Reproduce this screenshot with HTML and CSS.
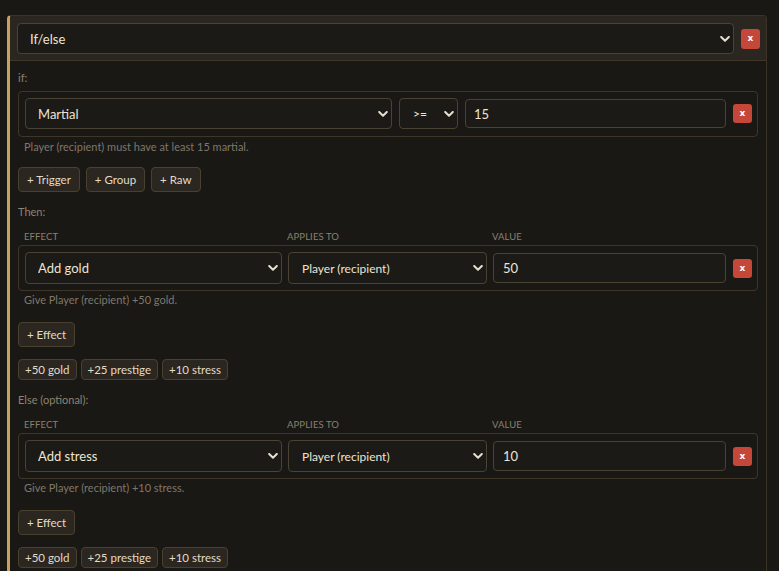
FILE: index.html
```html
<!DOCTYPE html>
<html>
<head>
<meta charset="utf-8">
<link rel="stylesheet" href="styles.css">
</head>
<body>
<div class="page">
  <div class="card">
    <div class="card-head">
      <div class="sel sel-type">
        <select><option>If/else</option></select>
        <svg class="chev" width="10" height="6" viewBox="0 0 10 6"><polyline points="1.2,1 5,4.8 8.8,1"/></svg>
      </div>
      <button class="del del-head">x</button>
    </div>
    <div class="card-body">
      <div class="sec-label sec-if">if:</div>
      <div class="row-box cond-row">
        <div class="sel sel-trait">
          <select><option>Martial</option></select>
          <svg class="chev" width="10" height="6" viewBox="0 0 10 6"><polyline points="1.2,1 5,4.8 8.8,1"/></svg>
        </div>
        <div class="sel sel-op">
          <select><option>&gt;=</option></select>
          <svg class="chev" width="10" height="6" viewBox="0 0 10 6"><polyline points="1.2,1 5,4.8 8.8,1"/></svg>
        </div>
        <input class="val val-cond" value="15">
        <button class="del">x</button>
      </div>
      <div class="hint">Player (recipient) must have at least 15 martial.</div>
      <div class="btn-row add-row">
        <button class="btn">+ Trigger</button>
        <button class="btn">+ Group</button>
        <button class="btn">+ Raw</button>
      </div>

      <div class="sec-label sec-then">Then:</div>
      <div class="cols"><span>Effect</span><span>Applies to</span><span>Value</span></div>
      <div class="row-box eff-row">
        <div class="sel sel-effect">
          <select><option>Add gold</option></select>
          <svg class="chev" width="10" height="6" viewBox="0 0 10 6"><polyline points="1.2,1 5,4.8 8.8,1"/></svg>
        </div>
        <div class="sel sel-target">
          <select><option>Player (recipient)</option></select>
          <svg class="chev" width="10" height="6" viewBox="0 0 10 6"><polyline points="1.2,1 5,4.8 8.8,1"/></svg>
        </div>
        <input class="val val-eff" value="50">
        <button class="del">x</button>
      </div>
      <div class="hint">Give Player (recipient) +50 gold.</div>
      <div class="btn-row effect-row"><button class="btn">+ Effect</button></div>
      <div class="btn-row quick">
        <button class="btn btn-q">+50 gold</button>
        <button class="btn btn-q">+25 prestige</button>
        <button class="btn btn-q">+10 stress</button>
      </div>

      <div class="sec-label sec-else">Else (optional):</div>
      <div class="cols"><span>Effect</span><span>Applies to</span><span>Value</span></div>
      <div class="row-box eff-row">
        <div class="sel sel-effect">
          <select><option>Add stress</option></select>
          <svg class="chev" width="10" height="6" viewBox="0 0 10 6"><polyline points="1.2,1 5,4.8 8.8,1"/></svg>
        </div>
        <div class="sel sel-target">
          <select><option>Player (recipient)</option></select>
          <svg class="chev" width="10" height="6" viewBox="0 0 10 6"><polyline points="1.2,1 5,4.8 8.8,1"/></svg>
        </div>
        <input class="val val-eff" value="10">
        <button class="del">x</button>
      </div>
      <div class="hint">Give Player (recipient) +10 stress.</div>
      <div class="btn-row effect-row"><button class="btn">+ Effect</button></div>
      <div class="btn-row quick">
        <button class="btn btn-q">+50 gold</button>
        <button class="btn btn-q">+25 prestige</button>
        <button class="btn btn-q">+10 stress</button>
      </div>
    </div>
  </div>
</div>
</body>
</html>
```

FILE: styles.css
```css
html, body {
  margin: 0;
  padding: 0;
  background: #1a1814;
  overflow: hidden;
}
body {
  font-family: Lato, "Liberation Sans", sans-serif;
  color: #e9e1d1;
}
.page {
  padding: 15px 12px 0 7px;
}
.card {
  background: #1a1814;
  border: 1px solid #3a3327;
  border-left: 3px solid #c9a15e;
  border-radius: 4px;
  padding-bottom: 20px;
}
.card-head {
  display: flex;
  align-items: center;
  gap: 7px;
  background: #2b2720;
  border-bottom: 1px solid #3d3629;
  border-radius: 3px 3px 0 0;
  padding: 7px 6px 6px 7px;
}
.sel {
  position: relative;
}
.sel select {
  appearance: none;
  -webkit-appearance: none;
  display: block;
  width: 100%;
  height: 31px;
  margin: 0;
  background: #1c1a16;
  border: 1px solid #4a4233;
  border-radius: 4px;
  color: #ece4d4;
  font-family: inherit;
  font-size: 13px;
  padding: 0 24px 0 12px;
  outline: none;
}
.chev {
  position: absolute;
  right: 4px;
  top: 50%;
  transform: translateY(-50%);
  fill: none;
  stroke: #e6dece;
  stroke-width: 2;
  stroke-linecap: round;
  stroke-linejoin: round;
  pointer-events: none;
}
.sel-type {
  flex: 1;
}
.del {
  width: 19px;
  height: 19px;
  padding: 0;
  margin: 0;
  border: none;
  border-radius: 3px;
  background: #c4473a;
  color: #fff;
  font-family: "DejaVu Sans", sans-serif;
  font-size: 9px;
  font-weight: bold;
  line-height: 19px;
  flex: none;
}
.del-head {
  height: 20px;
}
.card-body {
  padding: 0 8px;
}
.sec-label {
  font-size: 11px;
  line-height: 15px;
  color: #8c8372;
}
.sec-if { margin-top: 9px; }
.sec-then { margin-top: 12px; }
.sec-else { margin-top: 12px; }
.row-box {
  display: flex;
  align-items: center;
  border: 1px solid #3d3629;
  border-radius: 4px;
  padding: 6px 5px 6px 6px;
}
.cond-row {
  margin-top: 6px;
  gap: 7px;
  padding-bottom: 7px;
}
.sel-trait { width: 367px; flex: none; }
.sel-op { width: 59px; flex: none; }
.sel-op select { font-size: 12px; padding-left: 13px; }
.val {
  box-sizing: border-box;
  height: 30px;
  margin: 0;
  background: #1c1a16;
  border: 1px solid #4a4233;
  border-radius: 4px;
  color: #ece4d4;
  font-family: inherit;
  font-size: 13px;
  padding: 0 8px;
  outline: none;
  min-width: 0;
}
.val-cond { width: 261px; height: 29px; flex: none; }
.val-eff { flex: 1; padding-left: 9px; }
.hint {
  font-size: 11px;
  line-height: 15px;
  color: #7f776a;
  padding-left: 6px;
  margin-top: 2px;
}
.eff-row + .hint { margin-top: 1px; }
.btn-row {
  display: flex;
  gap: 6px;
}
.add-row { margin-top: 13px; }
.btn {
  height: 25px;
  margin: 0;
  padding: 0 8px;
  background: #2b2720;
  border: 1px solid #48412f;
  border-radius: 4px;
  color: #e2dacb;
  font-family: inherit;
  font-size: 11.5px;
}
.effect-row { margin-top: 15px; }
.quick {
  margin-top: 12px;
  gap: 4px;
}
.btn-q {
  height: 21px;
  padding: 0 6px;
}
.cols {
  display: flex;
  margin-top: 11px;
  padding-left: 6px;
  font-size: 9.5px;
  line-height: 13px;
  letter-spacing: 0.1px;
  text-transform: uppercase;
  color: #8a8070;
}
.cols span:nth-child(1) { width: 263px; }
.cols span:nth-child(2) { width: 205px; }
.eff-row {
  margin-top: 2px;
  gap: 6px;
}
.sel-effect { width: 257px; flex: none; }
.sel-target { width: 199px; flex: none; }
.sel-effect select { height: 32px; }
.sel-target select { height: 32px; font-size: 12px; padding-left: 13px; }
.eff-row .del { margin-left: 1px; }
```
